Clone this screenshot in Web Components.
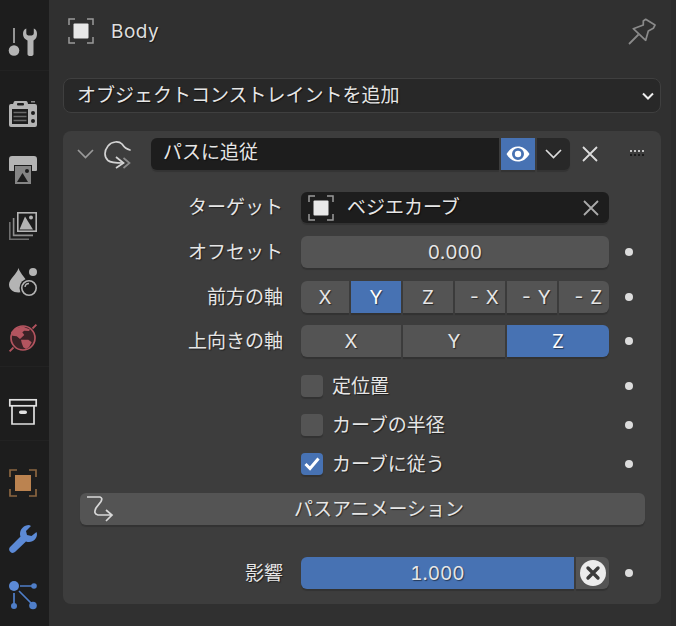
<!DOCTYPE html>
<html lang="ja">
<head>
<meta charset="utf-8">
<title>Follow Path</title>
<style>
html,body{margin:0;padding:0;background:#303030}
body{width:676px;height:626px;overflow:hidden;font-family:Inter,"Noto Sans CJK JP",sans-serif;font-size:19px;color:#e6e6e6;font-feature-settings:"tnum"}
</style>
</head>
<body>
<props-editor>
  <tab-bar slot="tabs">
    <tab-group top="28"><ui-icon name="tool"></ui-icon></tab-group>
    <tab-group top="29">
      <ui-icon name="render"></ui-icon><ui-icon name="output"></ui-icon><ui-icon name="layer"></ui-icon><ui-icon name="scene"></ui-icon><ui-icon name="world"></ui-icon>
    </tab-group>
    <tab-group top="31"><ui-icon name="collection"></ui-icon></tab-group>
    <tab-group top="28" last>
      <ui-icon name="object"></ui-icon><ui-icon name="modifier"></ui-icon><ui-icon name="particles"></ui-icon>
    </tab-group>
  </tab-bar>

  <crumb-header>Body</crumb-header>
  <drop-select>オブジェクトコンストレイントを追加</drop-select>

  <constraint-panel>
    <constraint-head>パスに追従</constraint-head>

    <prop-row label="ターゲット" nodot style="margin-top:22px">
      <target-field>ベジエカーブ</target-field>
    </prop-row>
    <prop-row label="オフセット" style="margin-top:12px">
      <ui-button>0.000</ui-button>
    </prop-row>
    <prop-row label="前方の軸" style="margin-top:13px">
      <axis-group columns="48px 50px 50px 50px 50px 50px">
        <ui-button seg="l">X</ui-button><ui-button seg="m" on>Y</ui-button><ui-button seg="m">Z</ui-button><ui-button seg="m" neg>- X</ui-button><ui-button seg="m" neg>- Y</ui-button><ui-button seg="r" neg>- Z</ui-button>
      </axis-group>
    </prop-row>
    <prop-row label="上向きの軸" style="margin-top:12px">
      <axis-group columns="100px 102px 102px">
        <ui-button seg="l">X</ui-button><ui-button seg="m">Y</ui-button><ui-button seg="r" on>Z</ui-button>
      </axis-group>
    </prop-row>

    <check-row style="margin-top:18px">定位置</check-row>
    <check-row style="margin-top:17px">カーブの半径</check-row>
    <check-row style="margin-top:17px" checked>カーブに従う</check-row>

    <anim-button>パスアニメーション</anim-button>

    <prop-row label="影響" style="margin-top:32px">
      <influence-field>1.000</influence-field>
    </prop-row>
  </constraint-panel>
</props-editor>

<script>
const GREY='#b4b4b4';
const ICONS={
tool:`<rect x="4.2" y="0" width="1.6" height="15" fill="${GREY}"/><circle cx="5" cy="22.5" r="5.3" fill="${GREY}"/>
<path d="M17.3.6V5Q17.3 7.6 21 7.6 24.8 7.6 24.8 5V.6Q28 2 28 6 28 10.500 24.500 12.500V26A3 2 0 0 1 18.500 26V12.500Q14 10.500 14 6 14 2 17.3.6Z" fill="${GREY}"/>`,
render:`<path d="M2 4H4L5 1.500Q5.300 1 6 1H17Q18 1 18.500 2L19 4H26Q28 4 28 6V25Q28 27 26 27H2Q0 27 0 25V6Q0 4 2 4Z" fill="${GREY}"/>
<rect x="8" y="3" width="7" height="2.600" rx="1" fill="#1d1d1d"/><rect x="22" y="1" width="4" height="1.500" fill="#8c8c8c"/>
<rect x="3" y="9" width="16" height="15" fill="#1d1d1d"/><path d="M4.500 12.500H17.500M4.500 16.500H17.500M4.500 20.500H17.500" stroke="#6a6a6a" stroke-width="1.400"/>
<circle cx="24" cy="13" r="2" fill="#1d1d1d"/><circle cx="24" cy="21" r="2" fill="#1d1d1d"/>`,
output:`<path d="M3 0H25Q28 0 28 3V14Q28 15 27 15H23V9H5V15H1Q0 15 0 14V3Q0 0 3 0Z" fill="${GREY}"/>
<rect x="6" y="10" width="16" height="18" fill="#858585"/><path d="M8 26L13.500 17 19 26Z" fill="#1d1d1d"/><circle cx="18" cy="15" r="2" fill="#1d1d1d"/>`,
layer:`<path d="M.8 10V27.300H20" fill="none" stroke="#6f6f6f" stroke-width="1.600"/><path d="M4.600 6V23.400H24" fill="none" stroke="#8e8e8e" stroke-width="1.600"/>
<rect x="8.800" y=".8" width="18.400" height="18.400" fill="none" stroke="${GREY}" stroke-width="1.600"/><path d="M10.500 17.500L16 4.500 24 17.500Z" fill="${GREY}"/><circle cx="22" cy="5.500" r="2" fill="${GREY}"/>`,
scene:`<circle cx="24" cy="4" r="4" fill="${GREY}"/><path d="M9.500 0C11 6 18.500 11 18.500 16.500 18.500 21 14 24.500 9.500 24.500 4 24.500 0 21 0 16.500 0 11 8 6 9.500 0Z" fill="${GREY}"/>
<circle cx="20" cy="20" r="9.500" fill="#1d1d1d"/><circle cx="20" cy="20" r="7.200" fill="none" stroke="${GREY}" stroke-width="1.600"/><path d="M16 19A4 4 0 0 1 20 15.500" fill="none" stroke="${GREY}" stroke-width="1.300"/>`,
world:`<circle cx="14" cy="14" r="12" fill="#3a2226" stroke="#b3545f" stroke-width="1.700"/><path d="M.6 27.400L4.500 23.500M23.500 4.500L27.400.6" stroke="#b3545f" stroke-width="1.800"/>
<path d="M6 4.300L14.300 2.300 16 3.500 21 5.500 20 7 15.300 6.700 13.300 8.300 15.300 11 11 15 7.700 12.300 3.300 11.700 2 8.300Z" fill="#b3545f"/>
<path d="M12 15.700H19.300L22.700 18.300 20 23.300 17 25 14.300 23.300 12.700 19Z" fill="#b3545f"/>`,
collection:`<rect x=".8" y="1.800" width="26.400" height="6" fill="none" stroke="#e0e0e0" stroke-width="1.700"/><path d="M3 8V26H25V8" fill="none" stroke="#e0e0e0" stroke-width="1.700"/><rect x="10" y="12.500" width="8" height="3.600" rx="1.800" fill="#e0e0e0"/>`,
object:`<path d="M1 8V1H8M20 1H27V8M27 20V27H20M8 27H1V20" fill="none" stroke="#8a6540" stroke-width="1.700"/><rect x="6" y="6" width="16" height="16" fill="#bb8350"/>`,
objwhite:`<path d="M1 7V1H7M19 1H25V7M25 19V25H19M7 25H1V19" fill="none" stroke="#9a9a9a" stroke-width="1.500"/><rect x="5.500" y="5.500" width="15" height="15" rx="1" fill="#e8e8e8"/>`,
modifier:`<path d="M20 0C15 0 11 4 11 9 11 10 11.300 11 11.500 11.500L1 22C-.5 23.500 0 26 1.500 27 3 28.500 5 28 6.500 26.500L17 16.500C18 17 19 17 20 17 25 17 28 13 28 9L27.500 7 22.500 11 18 10 17 6 22 1Z" fill="#5c8ad6"/>`,
particles:`<path d="M11 5H25M5 12V25M10 10L24 24" stroke="#4f7ec8" stroke-width="1.700"/><circle cx="5" cy="5" r="5" fill="#5c8ad6"/><circle cx="25" cy="5" r="2.800" fill="#4f7ec8"/><circle cx="5" cy="25" r="3" fill="#4f7ec8"/><circle cx="24" cy="24.500" r="3.800" fill="#4f7ec8"/>`,
pin:`<path d="M15.300 4L17.700 2.300 27 8 25.300 11.300 20.300 14 17.700 23.300 5.300 11.700 15.300 8Z" fill="none" stroke="#8a8a8a" stroke-width="1.700" stroke-linejoin="round"/><path d="M1 27L10.500 17.500" stroke="#8a8a8a" stroke-width="1.800"/>`,
follow:`<path d="M26 10C22 9 20 7 18 4 15 1 8 1 4 6 0 11 0 17 4 20.500 7 23 13 23 19 23" fill="none" stroke="#d4d4d4" stroke-width="1.700" stroke-linecap="round"/><path d="M12 17L19.500 23 12 28" fill="none" stroke="#d4d4d4" stroke-width="1.700"/><path d="M19.500 18L25.500 23 19.500 28" fill="none" stroke="#8c8c8c" stroke-width="1.700"/>`,
trail:`<path d="M1 2H14Q17 3 15 6.500L10 13Q7 19 12 20H25M20 15L26 20 20 26" fill="none" stroke="#d8d8d8" stroke-width="1.700"/>`
};
function def(name,html,extra){
  const tpl=document.createElement('template');tpl.innerHTML=html;
  customElements.define(name,class extends HTMLElement{
    constructor(){super();this.attachShadow({mode:'open'}).appendChild(tpl.content.cloneNode(true));}
    connectedCallback(){if(extra)extra(this,this.shadowRoot);}
  });
}
def('ui-icon',`<style>:host{display:block;width:28px;height:28px}svg{display:block;overflow:visible}</style><svg width="28" height="28" viewBox="0 0 28 28"></svg>`,
 (h,s)=>{const sz=h.getAttribute('size')||28;const v=s.querySelector('svg');v.setAttribute('width',sz);v.setAttribute('height',sz);v.setAttribute('viewBox',`0 0 ${sz} ${sz}`);v.innerHTML=ICONS[h.getAttribute('name')];if(h.hasAttribute('size')){h.style.width=sz+'px';h.style.height=sz+'px';}});

def('props-editor',`<style>
:host{display:grid;grid-template-columns:49px 622px 5px;width:676px;height:626px;background:#303030}
main{padding:17px 10px 0 14px;display:block;min-width:0}
.edge{background:#2c2c2c}
</style><slot name="tabs"></slot><main><slot></slot></main><div class="edge"></div>`);

def('tab-bar',`<style>:host{display:block;background:#1d1d1d;height:626px;overflow:hidden}</style><slot></slot>`);
def('tab-group',`<style>:host{display:flex;flex-direction:column;gap:28px;padding:var(--t,14px) 0 14px 9px;border-bottom:1px solid #222}
:host([last]){border-bottom:0}</style><slot></slot>`,(h)=>{h.style.setProperty('--t',h.getAttribute('top')+'px');});

def('crumb-header',`<style>:host{display:flex;align-items:center;height:28px;padding-left:5px}
ui-icon{margin-right:17px}
span{text-shadow:1px 1px 1px rgba(0,0,0,.5);color:#dedede;letter-spacing:.5px}
.pin{margin-left:auto;margin-right:5px}</style>
<ui-icon name="objwhite" size="26"></ui-icon><span><slot></slot></span><ui-icon class="pin" name="pin"></ui-icon>`);

def('drop-select',`<style>:host{display:flex;align-items:center;box-sizing:border-box;height:35px;margin-top:33px;padding:0 6px 0 13px;background:#282828;border:1.5px solid #3f3f3f;border-radius:8px}
span{flex:1;text-shadow:1px 1px 1px rgba(0,0,0,.6);white-space:nowrap;line-height:1}
svg{display:block}</style><span><slot></slot></span>
<svg width="12" height="8" viewBox="0 0 12 8"><path d="M1 1.500L6 6.500 11 1.500" fill="none" stroke="#eee" stroke-width="2"/></svg>`);

def('constraint-panel',`<style>:host{display:block;box-sizing:border-box;width:598px;height:473px;margin-top:18px;padding-top:7px;background:#3d3d3d;border-radius:8px}</style><slot></slot>`);

def('constraint-head',`<style>:host{display:flex;align-items:center;height:32px;padding-left:14px}
.fold{display:block;margin-right:10px}
.name{box-sizing:border-box;width:348px;height:32px;margin-left:19px;padding:0 0 3px 12px;display:flex;align-items:center;line-height:1;background:#1d1d1d;border-radius:6px 0 0 6px;box-shadow:0 2px 1px rgba(0,0,0,.16);text-shadow:1px 1px 1px rgba(0,0,0,.6)}
.eye{width:34px;height:32px;margin-left:2px;background:#4772b3;display:flex;align-items:center;justify-content:center;box-shadow:0 2px 1px rgba(0,0,0,.16)}
.more{width:33px;height:32px;margin-left:2px;background:#282828;border-radius:0 6px 6px 0;display:flex;align-items:center;justify-content:center;box-shadow:0 2px 1px rgba(0,0,0,.16)}
.x{margin-left:12px}.grip{margin-left:32px;margin-top:-1px}</style>
<svg class="fold" width="17" height="10" viewBox="0 0 17 10"><path d="M1 1L8.500 8.500 16 1" fill="none" stroke="#9a9a9a" stroke-width="1.700"/></svg>
<ui-icon name="follow"></ui-icon>
<div class="name"><slot></slot></div>
<div class="eye"><svg width="24" height="16" viewBox="0 0 24 16"><path fill-rule="evenodd" d="M.5 8C3.500 3 7.500 .5 12 .5S20.500 3 23.500 8C20.500 13 16.500 15.500 12 15.500S3.500 13 .5 8ZM6 8A6 6 0 0 0 18 8 6 6 0 0 0 6 8Z" fill="#fff"/><circle cx="12" cy="8" r="3.200" fill="#fff"/></svg></div>
<div class="more"><svg width="17" height="10" viewBox="0 0 17 10"><path d="M1 1L8.500 8.500 16 1" fill="none" stroke="#dcdcdc" stroke-width="1.700"/></svg></div>
<svg class="x" width="16" height="16" viewBox="0 0 16 16"><path d="M1 1L15 15M15 1L1 15" stroke="#dcdcdc" stroke-width="1.800"/></svg>
<svg class="grip" width="14" height="7" viewBox="0 0 14 7"><g fill="#c4c4c4"><rect x="0" y="0" width="2" height="2"/><rect x="4" y="0" width="2" height="2"/><rect x="8" y="0" width="2" height="2"/><rect x="12" y="0" width="2" height="2"/></g><g fill="#111" opacity=".8"><rect x="0" y="4" width="2" height="2"/><rect x="4" y="4" width="2" height="2"/><rect x="8" y="4" width="2" height="2"/><rect x="12" y="4" width="2" height="2"/></g></svg>`);

def('prop-row',`<style>:host{display:grid;grid-template-columns:238px 308px auto;column-gap:0;align-items:center;height:32px}
.lab{text-align:right;padding-right:18px;text-shadow:1px 1px 1px rgba(0,0,0,.5);white-space:nowrap;line-height:1}
:host([nodot]) .lab{padding-bottom:2px}
.f{grid-column:2;height:32px}
.dot{width:8px;height:8px;border-radius:50%;background:#dcdcdc;margin-left:16px}
:host([nodot]) .dot{display:none}</style>
<div class="lab"></div><div class="f"><slot></slot></div><div class="dot"></div>`,(h,s)=>{s.querySelector('.lab').textContent=h.getAttribute('label');});

def('ui-button',`<style>:host{display:flex;align-items:center;justify-content:center;box-sizing:border-box;height:32px;background:#545454;border-radius:6px;box-shadow:0 2px 1px rgba(0,0,0,.17);text-shadow:1px 1px 1px rgba(0,0,0,.5);line-height:1;color:#e6e6e6}
:host([on]){background:#4772b3;color:#fff}
:host([neg]){padding-left:7px}
:host([seg=l]){border-radius:6px 0 0 6px}:host([seg=m]){border-radius:0}:host([seg=r]){border-radius:0 6px 6px 0}</style><slot></slot>`);

def('axis-group',`<style>:host{display:grid;column-gap:2px;height:32px}</style><slot></slot>`,(h)=>{h.style.gridTemplateColumns=h.getAttribute('columns');});

def('target-field',`<style>:host{display:flex;align-items:center;box-sizing:border-box;height:31px;padding:0 10px 0 7px;background:#1d1d1d;border-radius:6px;box-shadow:0 2px 1px rgba(0,0,0,.17)}
span{flex:1;margin-left:13px;text-shadow:1px 1px 1px rgba(0,0,0,.6);line-height:1}</style>
<ui-icon name="objwhite" size="26"></ui-icon><span><slot></slot></span>
<svg width="16" height="16" viewBox="0 0 16 16"><path d="M1 1L15 15M15 1L1 15" stroke="#aaa" stroke-width="1.800"/></svg>`);

def('check-row',`<style>:host{display:flex;align-items:center;height:22px;margin-left:238px;text-shadow:1px 1px 1px rgba(0,0,0,.5);line-height:1}
.b{width:22px;height:22px;border-radius:4px;background:#545454;box-shadow:0 2px 1px rgba(0,0,0,.17);margin-right:9px;display:flex;align-items:center;justify-content:center}
.b svg{display:none}
:host([checked]) .b{background:#4772b3}:host([checked]) .b svg{display:block}
.t{flex:1}.dot{width:8px;height:8px;border-radius:50%;background:#dcdcdc;margin-right:28px}</style>
<div class="b"><svg width="16" height="14" viewBox="0 0 16 14"><path d="M1.500 7L6 11.500 14.500 1.500" fill="none" stroke="#fff" stroke-width="3"/></svg></div><div class="t"><slot></slot></div><div class="dot"></div>`);

def('anim-button',`<style>:host{display:flex;align-items:center;justify-content:center;position:relative;box-sizing:border-box;height:32px;margin:18px 16px 0 17px;padding-left:33px;background:#545454;border-radius:6px;box-shadow:0 2px 1px rgba(0,0,0,.17);text-shadow:1px 1px 1px rgba(0,0,0,.5);line-height:1}
ui-icon{position:absolute;left:6px;top:2px}</style><ui-icon name="trail"></ui-icon><slot></slot>`);

def('influence-field',`<style>:host{display:grid;grid-template-columns:273px 33px;column-gap:2px;height:32px}
.v{background:#4772b3;border-radius:6px 0 0 6px;display:flex;align-items:center;justify-content:center;box-shadow:0 2px 1px rgba(0,0,0,.17);text-shadow:1px 1px 1px rgba(0,0,0,.5);line-height:1}
.c{background:#545454;border-radius:0 6px 6px 0;display:flex;align-items:center;justify-content:center;box-shadow:0 2px 1px rgba(0,0,0,.17)}</style>
<div class="v"><slot></slot></div>
<div class="c"><svg width="26" height="26" viewBox="0 0 26 26"><circle cx="13" cy="13" r="13" fill="#ececec"/><path d="M8 8L18 18M18 8L8 18" stroke="#3c3c3c" stroke-width="3.400" stroke-linecap="round"/></svg></div>`);
</script>
</body>
</html>
